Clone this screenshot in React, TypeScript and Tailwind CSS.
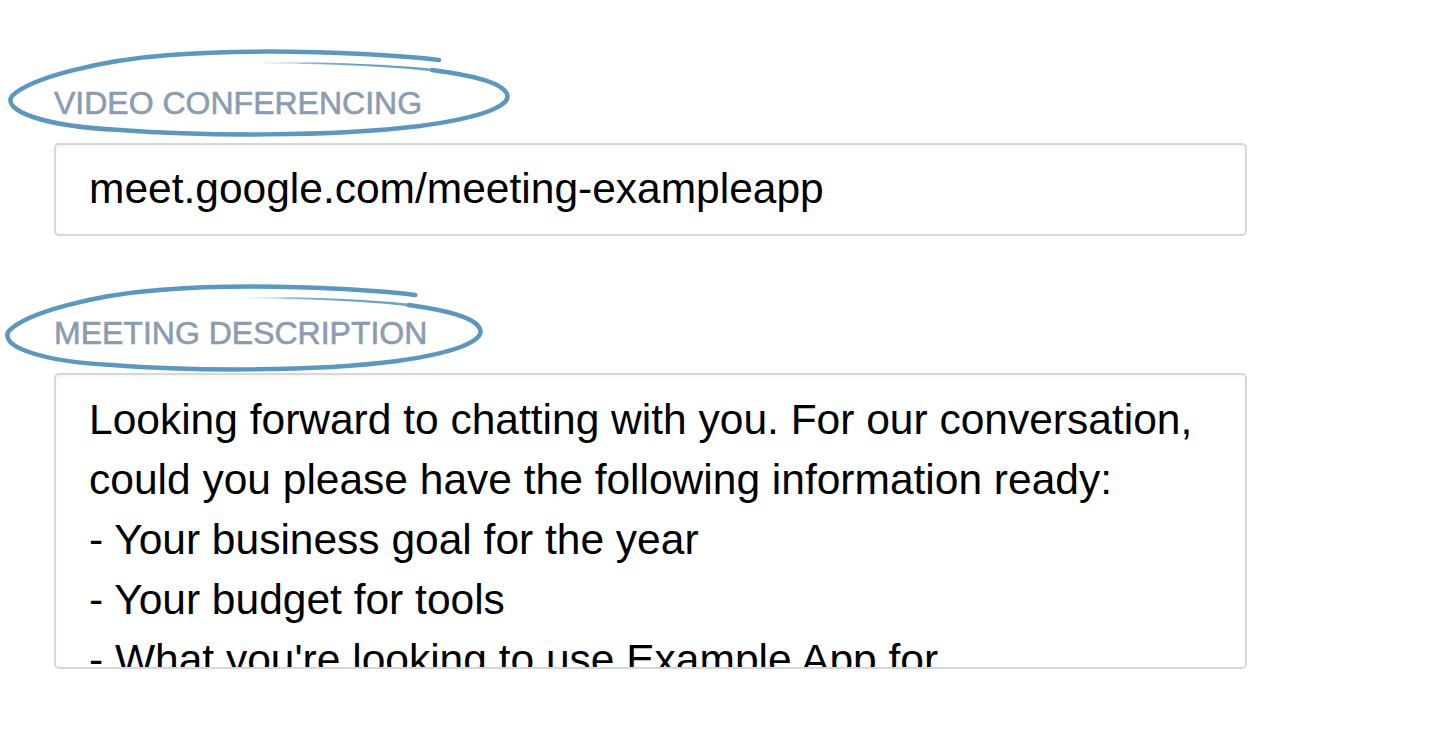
import React from "react";

const BLUE = "#5b97bf";

function Scribble({ transform, id }: { transform?: string; id: string }) {
  return (
    <svg
      className="absolute left-[-54px] top-[-40px] pointer-events-none"
      width={520}
      height={100}
      viewBox="0 47 520 100"
      fill="none"
    >
      <defs>
        <linearGradient id={id} x1="470" y1="0" x2="260" y2="0" gradientUnits="userSpaceOnUse">
          <stop offset="0" stopColor={BLUE} stopOpacity="1" />
          <stop offset="0.55" stopColor={BLUE} stopOpacity="0.75" />
          <stop offset="1" stopColor={BLUE} stopOpacity="0.05" />
        </linearGradient>
      </defs>
      <g transform={transform}>
        <path
          d="M 439 60 C 380 53, 260 48, 170 55 C 100 60, 30 78, 12 96 C 2 110, 40 126, 120 130 C 200 136, 330 137, 420 126 C 480 118, 512 106, 507 94 C 502 82, 470 75, 432 70"
          stroke={BLUE}
          strokeWidth={4.5}
          strokeLinecap="round"
          strokeLinejoin="round"
          vectorEffect="non-scaling-stroke"
        />
        <path
          d="M 445 72 C 400 66, 320 62, 262 63"
          stroke={`url(#${id})`}
          strokeWidth={2}
          strokeLinecap="round"
          vectorEffect="non-scaling-stroke"
        />
        <path
          d="M 430 69 C 390 65, 330 63, 300 63.5"
          stroke={`url(#${id})`}
          strokeWidth={1.2}
          strokeLinecap="round"
          vectorEffect="non-scaling-stroke"
        />
      </g>
    </svg>
  );
}

function Label({ children, scribble }: { children: React.ReactNode; scribble: React.ReactNode }) {
  return (
    <div className="relative h-[32px] text-[32px] leading-[32px] text-[#8b9cb0] [-webkit-text-stroke:0.6px_#8b9cb0]">
      <span className="relative z-0">{children}</span>
      {scribble}
    </div>
  );
}

export default function App() {
  const lines = [
    "Looking forward to chatting with you. For our conversation,",
    "could you please have the following information ready:",
    "- Your business goal for the year",
    "- Your budget for tools",
    "- What you're looking to use Example App for",
  ];
  return (
    <div
      className="w-[1454px] h-[730px] bg-white overflow-hidden pl-[54px] pt-[87px]"
      style={{ fontFamily: '"Liberation Sans", Arial, sans-serif' }}
    >
      <Label scribble={<Scribble id="g1" />}>VIDEO CONFERENCING</Label>
      <div className="mt-[24px] w-[1193px] h-[93px] border-2 border-[#d4d7dc] rounded-[5px] bg-white shadow-[inset_0_2px_3px_rgba(0,0,0,0.04)] pl-[33px] flex items-center">
        <span className="text-[42.5px] leading-none text-black">meet.google.com/meeting-exampleapp</span>
      </div>

      <div className="mt-[81px]">
        <Label scribble={<Scribble id="g2" transform="translate(5,5) scale(0.952,1) translate(-8,0)" />}>
          MEETING DESCRIPTION
        </Label>
      </div>
      <div className="mt-[24px] w-[1193px] h-[296px] border-2 border-[#d4d7dc] rounded-[5px] bg-white shadow-[inset_0_2px_3px_rgba(0,0,0,0.04)] pl-[33px] pt-[15px] overflow-hidden">
        {lines.map((l, i) => (
          <div key={i} className="text-[42.5px] leading-[60px] text-black whitespace-nowrap">
            {l}
          </div>
        ))}
      </div>
    </div>
  );
}
